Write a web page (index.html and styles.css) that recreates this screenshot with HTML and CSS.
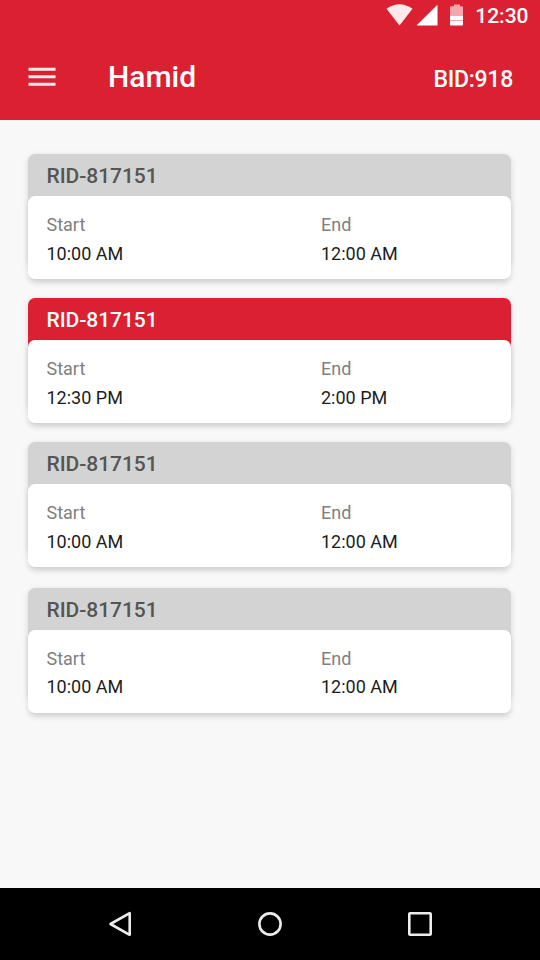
FILE: index.html
```html
<!DOCTYPE html>
<html lang="en">
<head>
<meta charset="utf-8">
<title>Hamid</title>
<link rel="stylesheet" href="styles.css">
</head>
<body>
<div class="screen">
  <header class="header">
    <div class="status">
      <svg class="status-icons" width="80" height="30" viewBox="0 0 80 30">
        <path class="wifi" d="M0.5 8.7 Q13.5 -0.4 26.500 8.700 L13.500 25.500Z"/>
        <path d="M30.500 25.500 L51.500 4.800 V25.500Z"/>
        <path class="level-empty" d="M68 16V4.500H74V6.200H76Q77 6.200 77 7.200V16ZM68 6.200H65Q64 6.200 64 7.200V16H68Z"/>
        <path d="M64 16H77V24.500Q77 25.500 76 25.500H65Q64 25.500 64 24.500Z"/>
        <path class="level-line" d="M64 20.500H77"/>
      </svg>
      <span class="clock">12:30</span>
    </div>
    <div class="appbar">
      <svg class="menu" width="28" height="20" viewBox="0 0 28 20">
        <path d="M0.500 2.200H27.500M0.500 9.700H27.500M0.500 17.200H27.500"/>
      </svg>
      <h1 class="title">Hamid</h1>
      <span class="bid">BID:918</span>
    </div>
  </header>
  <main class="list">
    <article class="card">
      <h2 class="rid">RID-817151</h2>
      <div class="times">
        <div class="time"><span class="label">Start</span><span class="value">10:00 AM</span></div>
        <div class="time"><span class="label">End</span><span class="value">12:00 AM</span></div>
      </div>
    </article>
    <article class="card active">
      <h2 class="rid">RID-817151</h2>
      <div class="times">
        <div class="time"><span class="label">Start</span><span class="value">12:30 PM</span></div>
        <div class="time"><span class="label">End</span><span class="value">2:00 PM</span></div>
      </div>
    </article>
    <article class="card">
      <h2 class="rid">RID-817151</h2>
      <div class="times">
        <div class="time"><span class="label">Start</span><span class="value">10:00 AM</span></div>
        <div class="time"><span class="label">End</span><span class="value">12:00 AM</span></div>
      </div>
    </article>
    <article class="card last">
      <h2 class="rid">RID-817151</h2>
      <div class="times">
        <div class="time"><span class="label">Start</span><span class="value">10:00 AM</span></div>
        <div class="time"><span class="label">End</span><span class="value">12:00 AM</span></div>
      </div>
    </article>
  </main>
  <nav class="navbar">
    <svg width="30" height="30" viewBox="0 0 30 30"><path d="M5.500 15 L24.700 4.200 V25.800Z"/></svg>
    <svg width="30" height="30" viewBox="0 0 30 30"><circle cx="15" cy="15" r="10.600"/></svg>
    <svg width="30" height="30" viewBox="0 0 30 30"><rect x="4.300" y="4.300" width="21.400" height="21.400" rx="0.800"/></svg>
  </nav>
</div>
</body>
</html>
```
FILE: styles.css
```css
* {
  box-sizing: border-box;
}

body {
  margin: 0;
  font-family: Roboto, "Liberation Sans", sans-serif;
}

.screen {
  width: 540px;
  height: 960px;
  display: flex;
  flex-direction: column;
  overflow: hidden;
  background: #f8f8f8;
}

.header {
  height: 120px;
  flex: none;
  background: #db2032;
  color: #fff;
}

.status {
  height: 32px;
  padding-right: 11.5px;
  display: flex;
  justify-content: flex-end;
  align-items: flex-start;
}

.status-icons {
  margin-right: 9.5px;
  fill: #fff;
}

.wifi {
  fill: #ffe9eb;
}

.level-empty {
  fill: #f6a7ae;
}

.level-line {
  stroke: #f6a7ae;
  stroke-width: 1;
}

.clock {
  font-size: 21px;
  font-weight: 500;
  line-height: 32px;
}

.appbar {
  height: 88px;
  padding: 2px 27px 0 28px;
  display: flex;
  align-items: center;
}

.menu {
  margin-right: 52px;
  stroke: #ffe8ea;
  stroke-width: 3;
}

.title {
  margin: 0;
  flex: 1;
  font-size: 30px;
  font-weight: 500;
  line-height: 86px;
}

.bid {
  padding-top: 4px;
  font-size: 23px;
  font-weight: 500;
  letter-spacing: -0.25px;
}

.list {
  flex: 1;
  padding: 34px 29px 0 28px;
}

.card {
  height: 111px;
  margin-bottom: 33px;
  border-radius: 7px;
  background: #d3d3d3;
  box-shadow: 0 2px 6px rgba(0, 0, 0, 0.14);
}

.rid {
  height: 42px;
  margin: 0;
  padding-left: 18.5px;
  color: #555;
  font-size: 21px;
  font-weight: 500;
  line-height: 44px;
  letter-spacing: -0.05px;
}

.active {
  background: #db2032;
}

.active .rid {
  color: #fff;
}

.times {
  height: 83px;
  padding: 14px 18.5px 0;
  display: grid;
  grid-template-columns: 274.5px 1fr;
  border-radius: 7px;
  background: #fff;
  box-shadow: 0 4px 6px -1px rgba(0, 0, 0, 0.19);
}

.time {
  display: flex;
  flex-direction: column;
  font-size: 18px;
  line-height: 29px;
}

.label {
  color: #808080;
}

.value {
  color: #1c1c1c;
}

.card.last {
  margin-top: 35px;
}

.last .value {
  line-height: 27px;
}

.navbar {
  height: 72px;
  flex: none;
  padding: 0 105px;
  display: flex;
  justify-content: space-between;
  align-items: center;
  background: #000;
}

.navbar svg {
  fill: none;
  stroke: #ececec;
  stroke-width: 2.6;
  stroke-linejoin: round;
}
```
